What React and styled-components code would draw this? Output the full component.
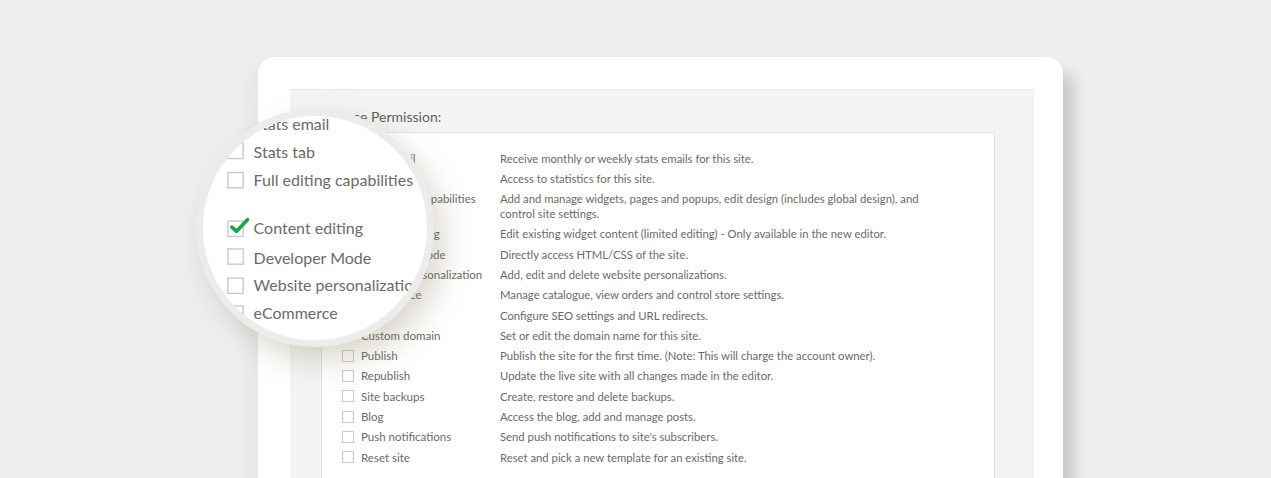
import styled, { createGlobalStyle } from 'styled-components';

const permissions = [
  { name: 'Stats email', text: 'Receive monthly or weekly stats emails for this site.' },
  { name: 'Stats tab', text: 'Access to statistics for this site.' },
  {
    name: 'Full editing capabilities',
    text: 'Add and manage widgets, pages and popups, edit design (includes global design), and control site settings.',
  },
  {
    name: 'Content editing',
    text: 'Edit existing widget content (limited editing) - Only available in the new editor.',
    checked: true,
  },
  { name: 'Developer Mode', text: 'Directly access HTML/CSS of the site.' },
  { name: 'Website personalization', text: 'Add, edit and delete website personalizations.' },
  { name: 'eCommerce', text: 'Manage catalogue, view orders and control store settings.' },
  { name: 'SEO', text: 'Configure SEO settings and URL redirects.' },
  { name: 'Custom domain', text: 'Set or edit the domain name for this site.' },
  { name: 'Publish', text: 'Publish the site for the first time. (Note: This will charge the account owner).' },
  { name: 'Republish', text: 'Update the live site with all changes made in the editor.' },
  { name: 'Site backups', text: 'Create, restore and delete backups.' },
  { name: 'Blog', text: 'Access the blog, add and manage posts.' },
  { name: 'Push notifications', text: "Send push notifications to site's subscribers." },
  { name: 'Reset site', text: 'Reset and pick a new template for an existing site.' },
];

function CheckMark() {
  return (
    <svg width="14" height="12" viewBox="0 0 14 12">
      <path
        d="M1.4 6.8 L4.8 9.8 L12.8 1.4"
        fill="none"
        stroke="#1fa34a"
        strokeWidth="2.6"
        strokeLinecap="round"
        strokeLinejoin="round"
      />
    </svg>
  );
}

function PermissionList() {
  return (
    <ListBox>
      {permissions.map((item) => (
        <Row key={item.name}>
          <Label>
            <Box>{item.checked && <CheckMark />}</Box>
            {item.name}
          </Label>
          <Description>{item.text}</Description>
        </Row>
      ))}
    </ListBox>
  );
}

export default function App() {
  return (
    <>
      <GlobalStyle />
      <Stage>
        <Card>
          <Panel>
            <Heading>Choose Permission:</Heading>
            <PermissionList />
          </Panel>
        </Card>
        <Lens>
          <Magnified>
            <PermissionList />
          </Magnified>
        </Lens>
      </Stage>
    </>
  );
}

const GlobalStyle = createGlobalStyle`
  html, body {
    margin: 0;
    height: 100%;
    overflow: hidden;
    background: #efefef;
  }

  body {
    font-family: Lato, 'Liberation Sans', sans-serif;
  }
`;

const Stage = styled.div`
  position: relative;
  width: 1271px;
  height: 478px;
  padding-top: 57px;
  box-sizing: border-box;
  overflow: hidden;
`;

const Card = styled.div`
  margin-left: 258px;
  width: 805px;
  height: 480px;
  padding: 32px 29px 0 32px;
  box-sizing: border-box;

  background: #fff;
  border-radius: 16px 16px 0 0;
  box-shadow: 18px 10px 14px -6px rgba(70, 70, 50, 0.2),
    -6px 6px 22px rgba(0, 0, 0, 0.05);
`;

const Panel = styled.div`
  height: 100%;
  padding: 18px 39px 0 31px;
  box-sizing: border-box;

  background: #f4f4f4;
  border-top: 1px solid #e9e9e9;
`;

const Heading = styled.div`
  height: 24px;

  color: #5e5e5e;
  font-size: 14px;
  line-height: 18px;
`;

const ListBox = styled.div`
  width: 674px;
  height: 400px;
  padding: 15px 0 0 20px;
  box-sizing: border-box;

  background: #fff;
  border: 1px solid #e3e3e3;
`;

const Row = styled.div`
  display: grid;
  grid-template-columns: 158px 432px;
  padding: 2.65px 0;

  color: #6a6a6a;
  font-size: 11.3px;
  line-height: 15px;
`;

const Label = styled.div`
  display: flex;
  align-items: center;
  gap: 7px;
  white-space: nowrap;
  height: 15px;
  font-size: 11.5px;
`;

const Box = styled.span`
  position: relative;
  flex: none;
  width: 10px;
  height: 10px;

  border: 1px solid #c9c9c9;
  background: #fff;

  svg {
    position: absolute;
    left: 1px;
    top: -3px;
  }
`;

const Description = styled.div``;

const Lens = styled.div`
  position: absolute;
  left: 196px;
  top: 109px;
  width: 238px;
  height: 238px;
  box-sizing: border-box;
  overflow: hidden;

  background: #fff;
  border: 7px solid #ececec;
  border-radius: 50%;
  box-shadow: 10px 14px 30px rgba(130, 115, 80, 0.28),
    inset 0 0 5px rgba(0, 0, 0, 0.07);
`;

const Magnified = styled.div`
  position: absolute;
  left: -5.5px;
  top: -29px;
  transform: scale(1.39);
  transform-origin: 0 0;

  > div {
    border-color: transparent;
  }
`;
